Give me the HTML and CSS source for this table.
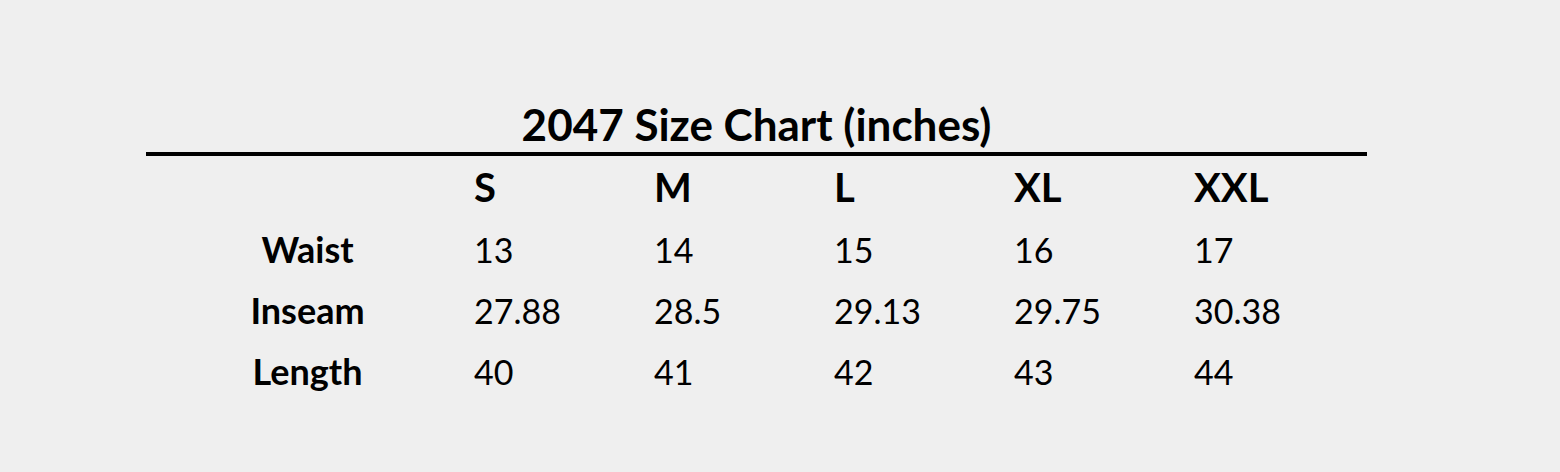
FILE: index.html
```html
<!DOCTYPE html>
<html lang="en">
<head>
<meta charset="utf-8">
<title>2047 Size Chart</title>
<link rel="stylesheet" href="styles.css">
</head>
<body>
<div class="chart">
  <h1 class="chart-title">2047 Size Chart (inches)</h1>
  <div class="chart-grid">
    <div class="row head">
      <div class="label"></div>
      <div class="cell">S</div>
      <div class="cell">M</div>
      <div class="cell">L</div>
      <div class="cell">XL</div>
      <div class="cell">XXL</div>
    </div>
    <div class="row data">
      <div class="label">Waist</div>
      <div class="cell">13</div>
      <div class="cell">14</div>
      <div class="cell">15</div>
      <div class="cell">16</div>
      <div class="cell">17</div>
    </div>
    <div class="row data">
      <div class="label">Inseam</div>
      <div class="cell">27.88</div>
      <div class="cell">28.5</div>
      <div class="cell">29.13</div>
      <div class="cell">29.75</div>
      <div class="cell">30.38</div>
    </div>
    <div class="row data">
      <div class="label">Length</div>
      <div class="cell">40</div>
      <div class="cell">41</div>
      <div class="cell">42</div>
      <div class="cell">43</div>
      <div class="cell">44</div>
    </div>
  </div>
</div>
</body>
</html>
```

FILE: styles.css
```css
html, body {
  margin: 0;
  padding: 0;
  background: #efefef;
  color: #000;
  font-family: "Lato", "Open Sans", sans-serif;
}
body {
  width: 1560px;
  height: 472px;
  overflow: hidden;
}
.chart {
  margin-left: 146px;
  width: 1221px;
  padding-top: 97px;
}
.chart-title {
  margin: 0;
  font-size: 44px;
  line-height: 55px;
  font-weight: 700;
  text-align: center;
  border-bottom: 4px solid #000;
}
.row {
  display: grid;
  grid-template-columns: 323px repeat(5, 180px) 1fr;
  align-items: baseline;
}
.label {
  text-align: center;
  font-weight: 700;
  font-size: 36px;
}
.cell {
  padding-left: 5px;
}
.head {
  font-size: 40px;
  line-height: 63px;
  font-weight: 700;
}
.data {
  font-size: 34px;
  line-height: 60px;
  font-weight: 400;
}
```
